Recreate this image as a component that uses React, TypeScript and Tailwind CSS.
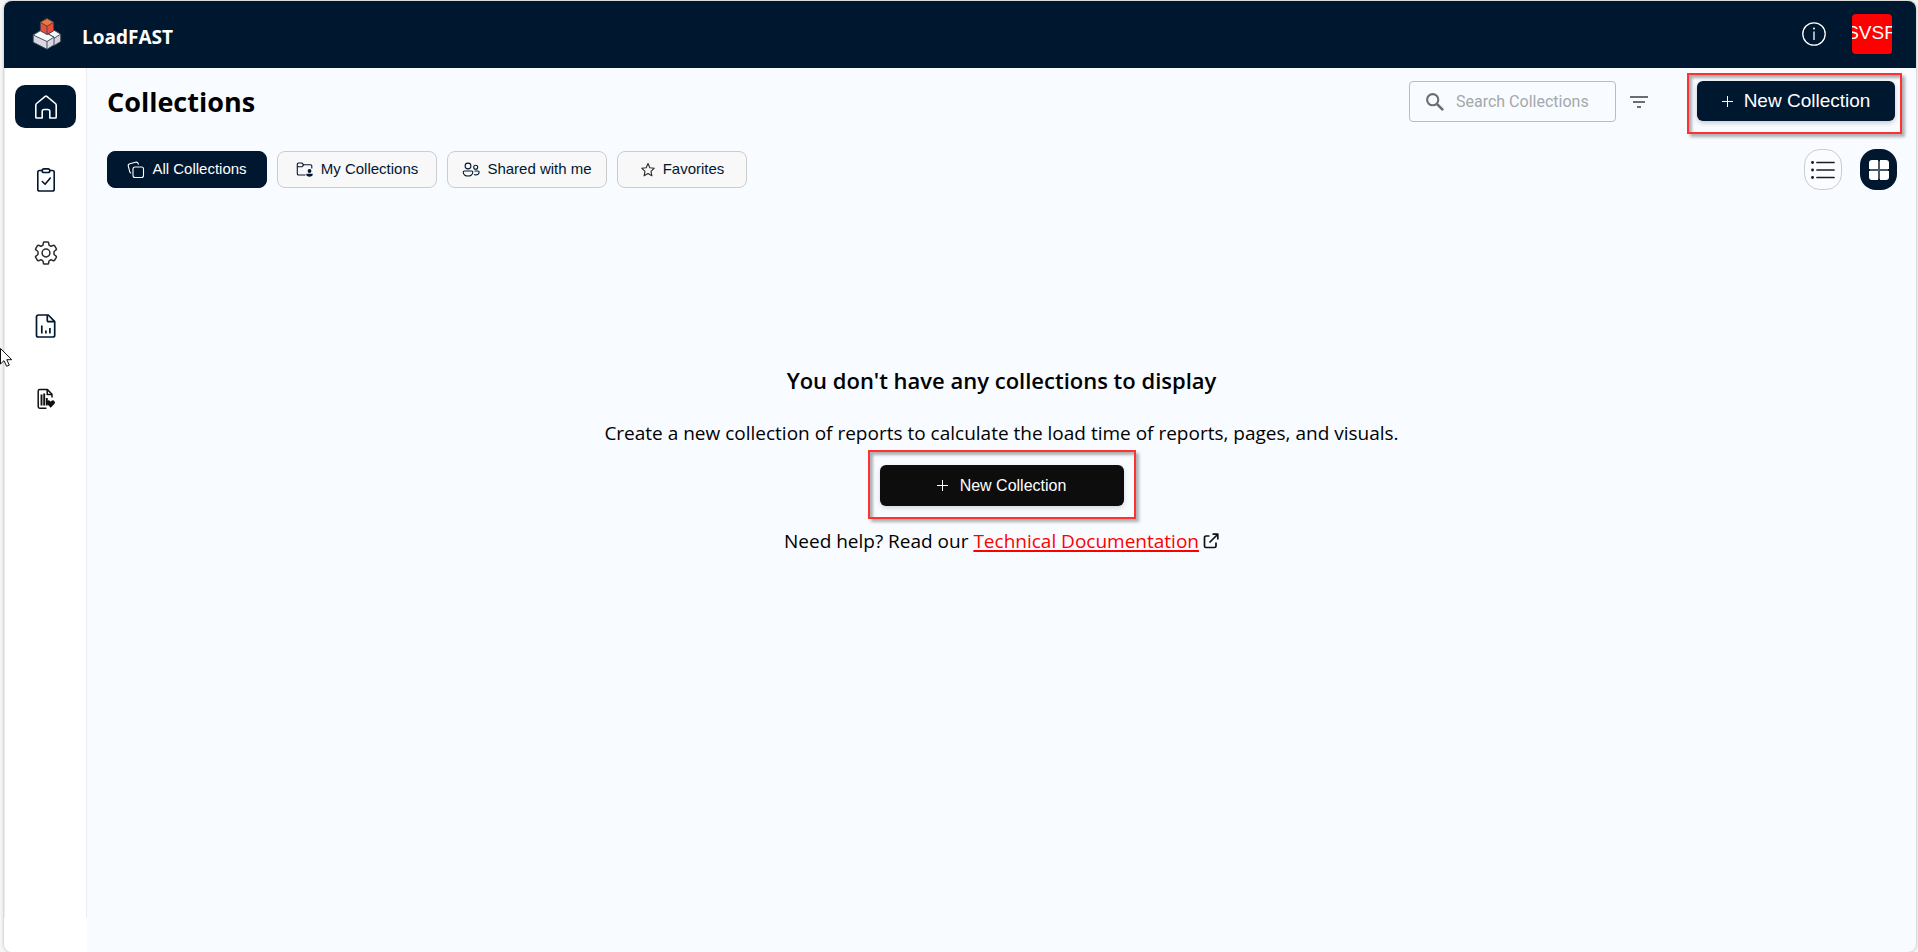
import type { ReactNode } from "react";

function LogoIcon() {
  return (
    <svg width="30" height="34" viewBox="0 0 30 34" aria-hidden="true">
      <g stroke="#3a4150" strokeWidth="0.9" strokeLinejoin="round">
        <path d="M15.500 17l6.500-3.800 6.700 4v7.300l-6.700 4.200-6.500-4z" fill="#cfd3db" />
        <path d="M15.500 17l6.500-3.800 6.700 4-6.700 4z" fill="#f3f5f9" />
        <path d="M1.200 18l8-4.800 12.800 7v7.800l-7 4.300L1.200 25.200z" fill="#d6d9e0" />
        <path d="M1.200 18l8-4.800 12.800 7-7 4.300z" fill="#f8fafc" />
        <path d="M15 24.500v7.700" fill="none" />
        <path d="M8.300 5.300L15 1.500l6.700 3.800v8.500L15 17.500l-6.700-3.700z" fill="#e9503b" />
        <path d="M8.300 5.300L15 1.500l6.700 3.800L15 9.200z" fill="#f0763a" />
        <path d="M15 9.200v8.300" fill="none" />
      </g>
    </svg>
  );
}

function HomeIcon() {
  return (
    <svg width="24" height="24" viewBox="0 0 24 24" fill="none" stroke="#fff" strokeWidth="1.6" strokeLinejoin="round" aria-hidden="true">
      <path d="M1.800 10.200C1.800 9.500 2 9 2.600 8.500L11.200 1.400a1.300 1.300 0 0 1 1.600 0l8.600 7.100c.6.5.8 1 .8 1.700V22.200a.8.800 0 0 1-.8.800h-5.600v-6.500a2 2 0 0 0-2-2h-3.600a2 2 0 0 0-2 2V23H2.600a.8.800 0 0 1-.8-.8z" />
    </svg>
  );
}

function ClipboardIcon() {
  return (
    <svg width="24" height="24" viewBox="0 0 24 24" fill="none" stroke="#001730" strokeWidth="1.600" strokeLinecap="round" strokeLinejoin="round" aria-hidden="true">
      <rect x="3.800" y="2.500" width="16.400" height="20.500" rx="1.800" />
      <rect x="8.200" y="0.900" width="7.600" height="3.600" rx="1.800" fill="#fff" />
      <path d="M8.300 13.500l2.800 2.800 5.200-6.300" />
    </svg>
  );
}

function GearIcon() {
  return (
    <svg width="24" height="24" viewBox="0 0 24 24" fill="none" stroke="#2b2b2b" strokeWidth="1.500" strokeLinejoin="round" aria-hidden="true">
      <circle cx="12" cy="12" r="3.900" />
      <path d="M10.200 1h3.600a.8.800 0 0 1 .8.700l.3 1.900c.1.500.4.800.8 1l.8.400c.4.200.8.200 1.200 0l1.800-.7a.8.800 0 0 1 1 .3l1.800 3.100a.8.800 0 0 1-.2 1.100l-1.500 1.200c-.4.300-.6.700-.6 1.100v1.800c0 .4.200.8.600 1.100l1.500 1.200c.3.300.4.700.2 1.100l-1.800 3.100a.8.800 0 0 1-1 .3l-1.800-.7c-.4-.2-.8-.2-1.200 0l-.8.400c-.4.200-.7.500-.8 1l-.3 1.900a.8.800 0 0 1-.8.700h-3.600a.8.800 0 0 1-.8-.7l-.3-1.900c-.1-.5-.4-.8-.8-1l-.8-.4c-.4-.2-.8-.2-1.200 0l-1.800.7a.8.800 0 0 1-1-.3l-1.800-3.100a.8.800 0 0 1 .2-1.100L3.400 14c.4-.3.6-.7.6-1.100v-1.800c0-.4-.2-.8-.6-1.100L1.900 8.800a.8.800 0 0 1-.2-1.100l1.800-3.100a.8.800 0 0 1 1-.3l1.800.7c.4.200.8.200 1.200 0l.8-.4c.4-.2.7-.5.8-1l.3-1.900a.8.800 0 0 1 .8-.7z" />
    </svg>
  );
}

function ReportIcon() {
  return (
    <svg width="24" height="24" viewBox="0 0 24 24" fill="none" stroke="#001730" strokeWidth="1.700" strokeLinejoin="round" aria-hidden="true">
      <path d="M4.300 1h10l6.400 6.700V21.200a1.800 1.800 0 0 1-1.800 1.800H4.300a1.800 1.800 0 0 1-1.800-1.800V2.800A1.800 1.800 0 0 1 4.300 1z" />
      <path d="M13.300 1v5.500a1.200 1.200 0 0 0 1.200 1.200h6.200M7.800 11.500V19.500M11.900 16.500v3M15.900 14v5.500" />
    </svg>
  );
}

function ReportHealthIcon() {
  return (
    <svg width="24" height="24" viewBox="0 0 24 24" fill="none" stroke="#111" strokeWidth="1.500" strokeLinejoin="round" aria-hidden="true">
      <path d="M12.500 21.200H5.800A1.600 1.600 0 0 1 4.200 19.600V4.200A1.600 1.600 0 0 1 5.800 2.600h7.600l4.600 4.600V10.500" />
      <path d="M13.200 2.600v4.800h4.800" />
      <path d="M7.500 7.500v11M10.200 6.500v12M12.800 11v7.500" strokeWidth="1.900" />
      <path d="M16.700 20.800l-3.600-3.700a2.100 2.100 0 0 1 0-3 2.100 2.100 0 0 1 3 0l.6.600.6-.6a2.100 2.100 0 0 1 3 0 2.100 2.100 0 0 1 0 3z" fill="#111" stroke="none" />
    </svg>
  );
}

function StackIcon() {
  return (
    <svg width="18" height="18" viewBox="0 0 18 18" fill="none" stroke="currentColor" strokeWidth="1.100" strokeLinejoin="round" aria-hidden="true">
      <rect x="6" y="6" width="10.500" height="10.500" rx="2" />
      <path d="M4.200 12.300C3.300 12 2.900 11.500 2.700 10.700L1.300 5.200c-.3-1.200.3-2.200 1.500-2.500L8.600 1.200c1.200-.3 2.200.2 2.600 1.500l.3 1" />
    </svg>
  );
}

function FolderUserIcon() {
  return (
    <svg width="18" height="18" viewBox="0 0 18 18" fill="none" stroke="currentColor" strokeWidth="1.100" strokeLinejoin="round" aria-hidden="true">
      <path d="M9.500 14H2.600A1.300 1.300 0 0 1 1.300 12.700V3.300A1.300 1.300 0 0 1 2.600 2h3.300l1.700 1.800h6.900a1.300 1.300 0 0 1 1.300 1.300V7.500" />
      <path d="M1.300 5.800h4.600l1.900-2" />
      <circle cx="13.500" cy="10" r="1.900" fill="currentColor" stroke="none" />
      <path d="M10.300 12.800h6.400v.7c0 1.400-1.300 2.200-3.200 2.200s-3.200-.8-3.200-2.200z" fill="currentColor" stroke="none" />
    </svg>
  );
}

function PeopleIcon() {
  return (
    <svg width="18" height="18" viewBox="0 0 18 18" fill="none" stroke="currentColor" strokeWidth="1.100" strokeLinejoin="round" aria-hidden="true">
      <circle cx="6" cy="5" r="2.900" />
      <circle cx="13.700" cy="6.200" r="2" />
      <path d="M2.300 10h7.400a1.100 1.100 0 0 1 1.100 1.100c0 2.400-2 3.900-4.800 3.900s-4.800-1.500-4.800-3.900A1.100 1.100 0 0 1 2.300 10z" />
      <path d="M12.500 10h3.600a1 1 0 0 1 1 1c0 1.800-1.500 2.900-3.400 2.900-.7 0-1.300-.1-1.800-.3" />
    </svg>
  );
}

function StarIcon() {
  return (
    <svg width="16" height="16" viewBox="0 0 16 16" fill="none" stroke="#2b2b2b" strokeWidth="1.100" strokeLinejoin="round" aria-hidden="true">
      <path d="M8 1.500l1.800 4.200 4.500.5-3.300 3.100.9 4.500L8 11.500l-3.900 2.300.9-4.500L1.700 6.200l4.500-.5z" />
    </svg>
  );
}

function PlusIcon() {
  return (
    <svg width="11" height="11" viewBox="0 0 11 11" stroke="#fff" strokeWidth="1" aria-hidden="true">
      <path d="M5.500 0v11M0 5.500h11" />
    </svg>
  );
}

const navItems = [
  { label: "Home", icon: <HomeIcon />, active: true },
  { label: "Tasks", icon: <ClipboardIcon />, active: false },
  { label: "Settings", icon: <GearIcon />, active: false },
  { label: "Reports", icon: <ReportIcon />, active: false },
  { label: "Report health", icon: <ReportHealthIcon />, active: false },
];

const tabs = [
  { label: "All Collections", icon: <StackIcon />, style: "w-40 border-[#001730] bg-[#001730] text-white" },
  { label: "My Collections", icon: <FolderUserIcon />, style: "w-40 border-[#cccccc] bg-[#f8f8f8] text-[#001730]" },
  { label: "Shared with me", icon: <PeopleIcon />, style: "w-40 border-[#cccccc] bg-[#f8f8f8] text-[#001730]" },
  { label: "Favorites", icon: <StarIcon />, style: "w-[130px] border-[#cccccc] bg-[#f8f8f8] text-[#001730]" },
];

function Highlight({ inset, children }: { inset: string; children: ReactNode }) {
  return (
    <div className="relative">
      {children}
      <div
        className={`pointer-events-none absolute border-2 border-[#ff3232] shadow-[3px_3px_3px_rgba(0,0,0,0.3),inset_3px_3px_3px_rgba(0,0,0,0.3)] ${inset}`}
      />
    </div>
  );
}

export default function App() {
  return (
    <div className="relative flex min-h-screen flex-col bg-[#f5f5f5] pt-px pr-0.5 pl-1 font-['Open_Sans','Noto_Sans',sans-serif] text-black">
      <div className="flex flex-1 flex-col overflow-hidden rounded-lg bg-[#f8fbff] shadow-[0_0_3px_rgba(0,0,0,0.3)]">
        <header className="flex h-[67px] items-center bg-[#001730] pr-6 pb-0.5 pl-7">
          <LogoIcon />
          <span className="mt-2 ml-5 text-[19px] font-bold text-white">LoadFAST</span>
          <div className="ml-auto flex items-center gap-[26px]">
            <button type="button" aria-label="Information">
              <svg width="24" height="24" viewBox="0 0 24 24" fill="none" stroke="#fff" strokeWidth="1.300" aria-hidden="true">
                <circle cx="12" cy="12" r="11.200" />
                <path d="M12 9.500V18" />
                <circle cx="12" cy="6.500" r="1" fill="#fff" stroke="none" />
              </svg>
            </button>
            <button type="button" className="flex size-10 items-center justify-center overflow-hidden rounded bg-[#ff0000] font-['Liberation_Sans',Arial,sans-serif] text-[19px] text-white">
              <span>SVSR</span>
            </button>
          </div>
        </header>

        <div className="flex flex-1">
          <aside className="flex w-[83px] shrink-0 flex-col bg-white pb-[34px]">
            <nav className="flex flex-1 flex-col items-center gap-[30px] border-x border-[#ececec] pt-[17px]">
              {navItems.map((item) => (
                <a
                  key={item.label}
                  href="#"
                  aria-label={item.label}
                  className={
                    item.active
                      ? "flex h-[43px] w-[61px] items-center justify-center rounded-[10px] bg-[#001730] pl-px"
                      : "flex h-[43px] w-[61px] items-center justify-center rounded-[10px] pl-px"
                  }
                >
                  {item.icon}
                </a>
              ))}
            </nav>
          </aside>

          <main className="flex flex-1 flex-col pl-5">
            <div className="flex items-start pt-[13px] pr-[21px]">
              <h1 className="flex-1 text-[27px] leading-[42px] font-bold">Collections</h1>
              <label className="flex h-[41px] w-[207px] items-center rounded border border-[#b9bcc0] pl-4">
                <svg width="18" height="18" viewBox="0 0 18 18" fill="none" stroke="#6b6d70" strokeWidth="2.100" className="shrink-0" aria-hidden="true">
                  <circle cx="6.700" cy="6.700" r="5.600" />
                  <path d="M10.800 10.800l6.300 6.300" strokeWidth="2.600" />
                </svg>
                <input
                  type="text"
                  aria-label="Search Collections"
                  placeholder="Search Collections"
                  className="ml-3 w-full min-w-0 bg-transparent font-['Roboto',sans-serif] text-base outline-none placeholder:text-[#a5a8ab]"
                />
              </label>
              <button type="button" aria-label="Filter" className="mr-[49px] ml-3.5 flex h-[41px] items-center">
                <svg width="18" height="12" viewBox="0 0 18 12" fill="#6b6d70" aria-hidden="true">
                  <path d="M0 0h18v2H0zM3 5h12v2H3zM7 10h4v2H7z" />
                </svg>
              </button>
              <Highlight inset="-top-2 -right-[7px] -bottom-[13px] -left-[10px]">
                <button type="button" className="flex h-10 w-[198px] items-center justify-center gap-[11px] rounded-md bg-[#001730] font-['Liberation_Sans',Arial,sans-serif] text-[19px] text-white shadow-[0_2px_5px_rgba(0,0,0,0.2)]">
                  <PlusIcon />
                  New Collection
                </button>
              </Highlight>
            </div>

            <div className="flex items-center pt-[26px] pr-[19px]">
              <div className="flex flex-1 gap-2.5">
                {tabs.map((tab) => (
                  <button
                    key={tab.label}
                    type="button"
                    className={`flex h-[37px] items-center justify-center gap-[7px] rounded-lg border font-['Liberation_Sans',Arial,sans-serif] text-[15px] ${tab.style}`}
                  >
                    {tab.icon}
                    {tab.label}
                  </button>
                ))}
              </div>
              <div className="flex gap-[18px]">
                <button type="button" aria-label="List view" className="flex h-[41px] w-[38px] items-center justify-center rounded-2xl border border-[#cccccc] bg-[#fafcff]">
                  <svg width="24" height="20" viewBox="0 0 24 20" stroke="#1c1c1c" strokeWidth="1.700" strokeLinecap="round" aria-hidden="true">
                    <path d="M6 2.500h17M6 10h17M6 17.500h17" />
                    <path d="M1.500 2.500h.1M1.500 10h.1M1.500 17.500h.1" strokeWidth="2.800" />
                  </svg>
                </button>
                <button type="button" aria-label="Grid view" className="flex h-[41px] w-[37px] items-center justify-center rounded-2xl bg-[#001730]">
                  <svg width="20" height="20" viewBox="0 0 20 20" fill="#fff" aria-hidden="true">
                    <rect x="1" y="1" width="18" height="18" rx="3" fill="#4a5a6c" />
                    <path d="M3 0h6v9H0V3a3 3 0 0 1 3-3zM11 0h6a3 3 0 0 1 3 3v6h-9zM0 11h9v9H3a3 3 0 0 1-3-3zM11 11h9v6a3 3 0 0 1-3 3h-6z" />
                  </svg>
                </button>
              </div>
            </div>

            <section className="-ml-5 flex flex-col items-center pt-[173px]">
              <h2 className="text-[22px] leading-[34px] font-semibold">You don't have any collections to display</h2>
              <p className="mt-[22px] text-[19px] leading-7">Create a new collection of reports to calculate the load time of reports, pages, and visuals.</p>
              <div className="mt-[18px]">
                <Highlight inset="-top-[15px] -right-3 -bottom-[13px] -left-3">
                  <button type="button" className="flex h-[41px] w-[244px] items-center justify-center gap-3 rounded-md bg-[#0d0d0d] font-['Liberation_Sans',Arial,sans-serif] text-base text-white shadow-[0_2px_5px_rgba(0,0,0,0.15)]">
                    <PlusIcon />
                    New Collection
                  </button>
                </Highlight>
              </div>
              <p className="mt-[21px] flex items-center text-[19px] leading-7">
                <span>
                  Need help? Read our{" "}
                  <a href="#" className="text-[#ff0000] underline decoration-2 underline-offset-2">Technical Documentation</a>
                </span>
                <svg className="ml-1" width="16" height="16" viewBox="0 0 16 16" fill="none" stroke="#111" strokeWidth="1.700" strokeLinejoin="round" aria-hidden="true">
                  <path d="M6.500 3H3a1.500 1.500 0 0 0-1.500 1.500V13A1.500 1.500 0 0 0 3 14.500h8.500A1.500 1.500 0 0 0 13 13V9.500M9.500 1.200h5.300v5.300M14.500 1.500L6.500 9.500" />
                </svg>
              </p>
            </section>
          </main>
        </div>
      </div>

      <svg className="pointer-events-none absolute top-[347px] left-0" width="13" height="21" viewBox="0 0 13 21" fill="#fff" stroke="#111" strokeWidth="1" aria-hidden="true">
        <path d="M.500 1.500v15.500l3.500-3.300 2.600 5.600 2.700-1.200-2.500-5.400h5z" />
      </svg>
    </div>
  );
}
